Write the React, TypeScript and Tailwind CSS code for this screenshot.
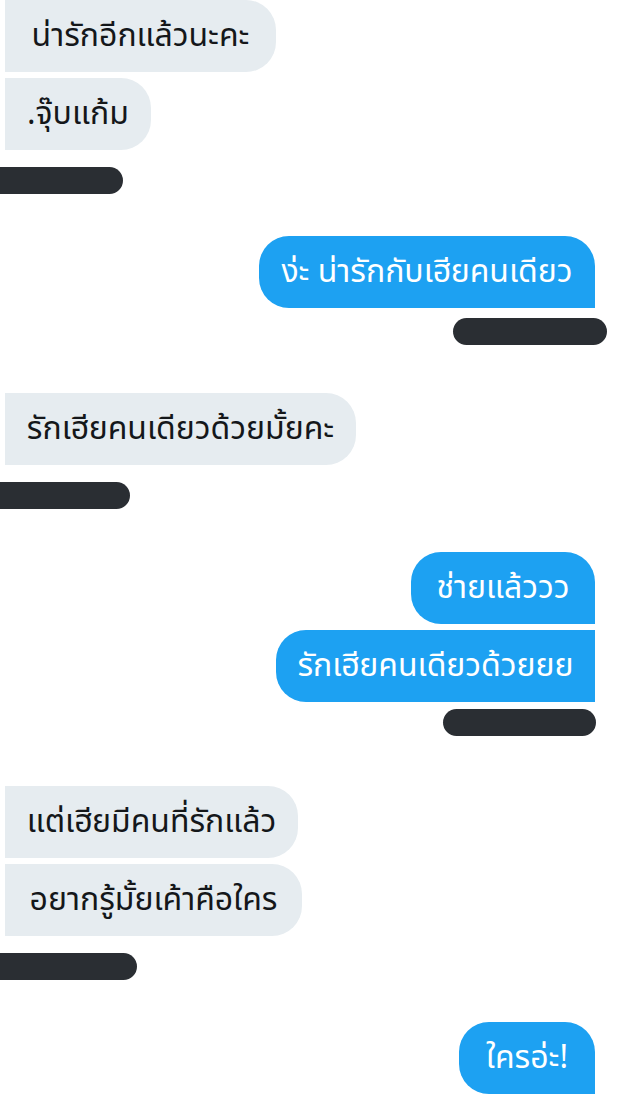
type Line = { text: string; w: string }

type Msg = {
  side: 'in' | 'out'
  lines: Line[]
  bar: string
  className: string
}

const thread: Msg[] = [
  {
    side: 'in',
    lines: [
      { text: 'น่ารักอีกแล้วนะคะ', w: 'w-[271px]' },
      { text: '.จุ๊บแก้ม', w: 'w-[146px]' },
    ],
    bar: 'w-[123px] mt-[17px]',
    className: 'mt-0',
  },
  {
    side: 'out',
    lines: [{ text: 'ง่ะ น่ารักกับเฮียคนเดียว', w: 'w-[336px]' }],
    bar: 'w-[154px] mt-[10px] mr-[-12px]',
    className: 'mt-[42px]',
  },
  {
    side: 'in',
    lines: [{ text: 'รักเฮียคนเดียวด้วยมั้ยคะ', w: 'w-[351px]' }],
    bar: 'w-[130px] mt-[17px]',
    className: 'mt-[48px]',
  },
  {
    side: 'out',
    lines: [
      { text: 'ช่ายแล้ววว', w: 'w-[184px]' },
      { text: 'รักเฮียคนเดียวด้วยยย', w: 'w-[319px]' },
    ],
    bar: 'w-[153px] mt-[7px] mr-[-1px]',
    className: 'mt-[43px]',
  },
  {
    side: 'in',
    lines: [
      { text: 'แต่เฮียมีคนที่รักแล้ว', w: 'w-[293px]' },
      { text: 'อยากรู้มั้ยเค้าคือใคร', w: 'w-[297px]' },
    ],
    bar: 'w-[137px] mt-[17px]',
    className: 'mt-[50px]',
  },
  {
    side: 'out',
    lines: [{ text: 'ใครอ่ะ!', w: 'w-[136px]' }],
    bar: '',
    className: 'mt-[42px]',
  },
]

function Bubble({ side, line, first }: { side: 'in' | 'out'; line: Line; first: boolean }) {
  if (side === 'in') {
    return (
      <div
        className={`flex h-[72px] items-center justify-center whitespace-nowrap rounded-r-[30px] bg-[#e6ecf0] text-[#14171a] ${line.w}`}
      >
        {line.text}
      </div>
    )
  }
  return (
    <div
      className={`flex h-[72px] items-center justify-center whitespace-nowrap rounded-l-[30px] bg-[#1da1f2] text-white ${line.w} ${
        first ? 'rounded-tr-[30px]' : ''
      }`}
    >
      {line.text}
    </div>
  )
}

export default function App() {
  return (
    <div className="flex min-h-[1097px] w-[619px] flex-col overflow-hidden bg-white font-['Noto_Sans_Thai','Noto_Sans',sans-serif] text-[32px] leading-none">
      {thread.map((m, i) => (
        <section
          key={i}
          className={`flex flex-col ${m.className} ${
            m.side === 'in' ? 'items-start pl-[5px]' : 'items-end pr-[24px]'
          }`}
        >
          <div className={`flex flex-col gap-[6px] ${m.side === 'in' ? 'items-start' : 'items-end'}`}>
            {m.lines.map((l, j) => (
              <Bubble key={j} side={m.side} line={l} first={j === 0} />
            ))}
          </div>
          {m.bar && (
            <div
              className={`h-[27px] bg-[#2a2e33] ${m.bar} ${
                m.side === 'in' ? 'ml-[-5px] rounded-r-full' : 'rounded-full'
              }`}
            />
          )}
        </section>
      ))}
    </div>
  )
}
